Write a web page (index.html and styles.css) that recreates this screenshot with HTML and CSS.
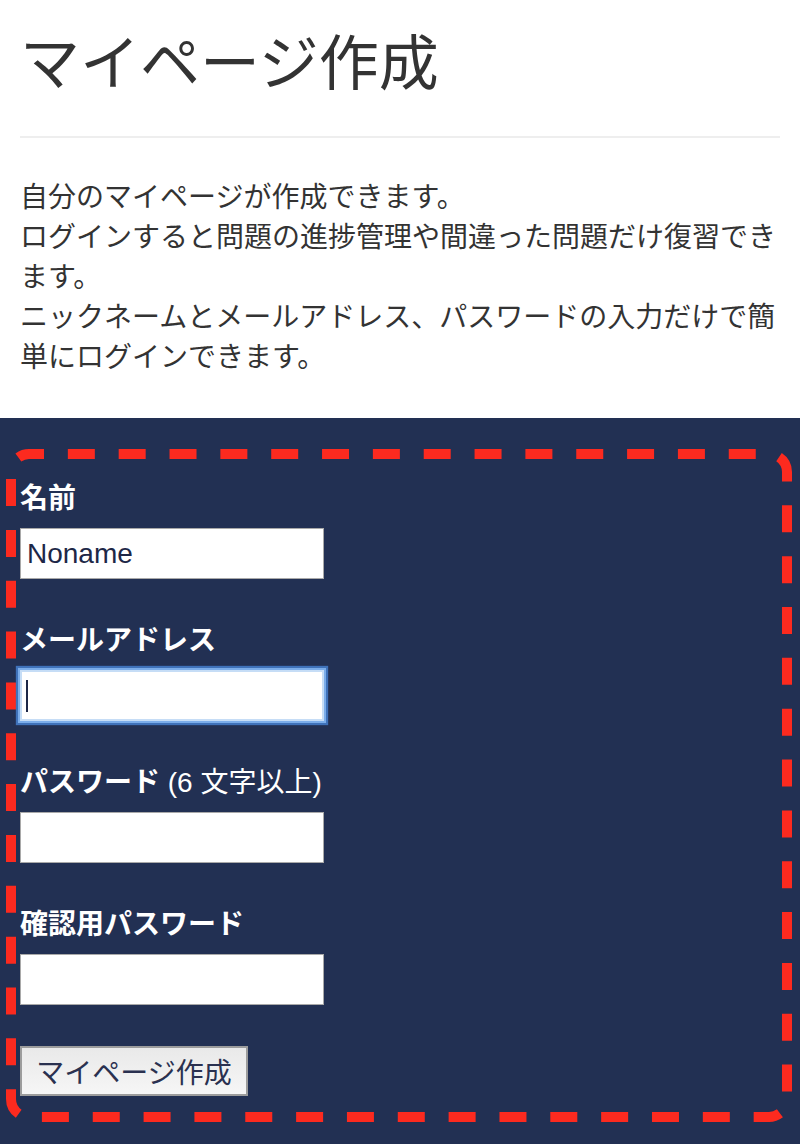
FILE: index.html
```html
<!DOCTYPE html>
<html lang="ja">
<head>
<meta charset="utf-8">
<title>マイページ作成</title>
<link rel="stylesheet" href="styles.css">
</head>
<body>
<div class="container">
  <div class="page-header">
    <h1 class="title">マイページ作成</h1>
  </div>
  <p class="lead-text">自分のマイページが作成できます。<br>ログインすると問題の進捗管理や間違った問題だけ復習できます。<br>ニックネームとメールアドレス、パスワードの入力だけで簡単にログインできます。</p>
</div>
<section class="form-section">
  <form class="form-box">
    <svg class="dash-frame" width="786" height="673" viewBox="0 0 786 673" aria-hidden="true">
      <rect x="5" y="5" width="776" height="663" rx="18" ry="18" fill="none" stroke="#fc2a1f" stroke-width="10" stroke-dasharray="27 23.84" stroke-dashoffset="12"/>
    </svg>
    <div class="form-group">
      <label class="form-label">名前</label>
      <input class="text-input" type="text" value="Noname">
    </div>
    <div class="form-group">
      <label class="form-label">メールアドレス</label>
      <span class="input-wrap"><input class="text-input is-focused" type="text"><span class="caret"></span></span>
    </div>
    <div class="form-group">
      <label class="form-label">パスワード<span class="label-note"> (6 文字以上)</span></label>
      <input class="text-input" type="password">
    </div>
    <div class="form-group last">
      <label class="form-label">確認用パスワード</label>
      <input class="text-input" type="password">
    </div>
    <button class="submit-btn" type="button">マイページ作成</button>
  </form>
</section>
</body>
</html>
```
FILE: styles.css
```css
html, body {
  margin: 0;
  padding: 0;
  background: #ffffff;
}
body {
  font-family: "Noto Sans CJK JP", "Noto Sans", sans-serif;
  color: #333333;
  width: 800px;
  height: 1144px;
  overflow: hidden;
  display: flex;
  flex-direction: column;
}
.container {
  padding: 0 20px;
}
.page-header {
  padding: 26px 0 44px;
  border-bottom: 2px solid #eeeeee;
}
.title {
  margin: 0;
  font-size: 60px;
  line-height: 66px;
  font-weight: 400;
  color: #333333;
}
.lead-text {
  margin: 37px 0 43px;
  font-size: 28px;
  line-height: 40px;
  color: #333333;
}
.form-section {
  flex: 1;
  background: #223053;
  padding: 31px 8px 22px 6px;
}
.form-box {
  position: relative;
  border: 10px solid transparent;
  padding: 17px 4px 16px;
  margin: 0;
}
.dash-frame {
  position: absolute;
  left: -10px;
  top: -10px;
  overflow: visible;
  pointer-events: none;
}
.form-group {
  margin-bottom: 39px;
}
.form-group.last {
  margin-bottom: 41px;
}
.form-label {
  display: block;
  height: 40px;
  overflow: hidden;
  font-size: 28px;
  line-height: 40px;
  font-weight: 700;
  color: #ffffff;
  margin-bottom: 12px;
}
.label-note {
  font-weight: 400;
  font-family: "Liberation Sans", "Noto Sans CJK JP", sans-serif;
  line-height: 1;
}
.text-input {
  display: block;
  box-sizing: border-box;
  width: 304px;
  height: 51px;
  margin: 0;
  padding: 0 6px;
  border: 1px solid #a9a9a9;
  background: #ffffff;
  font-family: "Liberation Sans", "Noto Sans CJK JP", sans-serif;
  font-size: 28px;
  color: #1d2747;
  outline: none;
}
.input-wrap {
  position: relative;
  display: block;
  width: 304px;
  height: 51px;
}
.text-input.is-focused {
  border: 2px solid #c6ddf6;
  box-shadow: 0 0 0 2px #7badea, 0 0 1px 4px #3f72ba;
}
.caret {
  position: absolute;
  left: 6px;
  top: 10px;
  width: 2px;
  height: 32px;
  background: #1d2747;
}
.submit-btn {
  display: block;
  box-sizing: border-box;
  width: 228px;
  height: 50px;
  margin: 0;
  padding: 0;
  border: 2px solid #9c9c9c;
  background: linear-gradient(#e9e9e9, #f6f6f6);
  font-family: "Noto Sans CJK JP", sans-serif;
  font-size: 28px;
  line-height: 46px;
  color: #2a3150;
  text-align: center;
}
```
